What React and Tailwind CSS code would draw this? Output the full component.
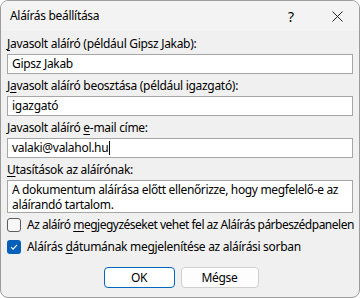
import React from "react";

const font = { fontFamily: '"Noto Sans", "Open Sans", sans-serif' };

const Key = ({ children }) => <span className="underline underline-offset-2">{children}</span>;

const Field = ({ label, value, cursor }) => (
  <div className="flex flex-col">
    <div className="h-[16px] leading-[16px] mt-[4px] mb-[2px] whitespace-nowrap">{label}</div>
    <div className="h-[20px] bg-white border border-[#a6a6a6] flex items-center px-[4px]">
      <span className="leading-[16px]">{value}</span>
      {cursor && <span className="w-px h-[14px] bg-black ml-[1px]" />}
    </div>
  </div>
);

export default function App() {
  return (
    <div
      className="w-[360px] h-[298px] bg-[#f0f0f0] border border-[#9c9c9c] rounded-[8px] overflow-hidden flex flex-col text-[12px] text-black tracking-[-0.3px]"
      style={font}
    >
      {/* title bar */}
      <div className="h-[30px] bg-[#f3f3f3] flex items-center shrink-0">
        <div className="pl-[9px] flex-1">Aláírás beállítása</div>
        <div className="w-[30px] text-center text-[14px] mr-[16px]">?</div>
        <div className="w-[30px] flex justify-center mr-[7px]">
          <svg width="11" height="11" viewBox="0 0 11 11">
            <path d="M0.5 0.5 L10.5 10.5 M10.5 0.5 L0.5 10.5" stroke="#222" strokeWidth="1" />
          </svg>
        </div>
      </div>

      <div className="px-[6px] pt-[1px] flex flex-col">
        <Field label={<><Key>J</Key>avasolt aláíró (például Gipsz Jakab):</>} value="Gipsz Jakab" />
        <Field label={<>J<Key>a</Key>vasolt aláíró beosztása (például igazgató):</>} value="igazgató" />
        <Field label={<>Javasolt aláíró <Key>e</Key>-mail címe:</>} value="valaki@valahol.hu" cursor />

        <div className="h-[16px] leading-[16px] mt-[4px] mb-[2px]">
          <Key>U</Key>tasítások az aláírónak:
        </div>
        <div className="h-[33px] bg-white border border-[#a6a6a6] px-[4px] pt-[1px] leading-[15px] tracking-[-0.35px]">
          A dokumentum aláírása előtt ellenőrizze, hogy megfelelő-e az aláírandó tartalom.
        </div>

        <div className="h-[22px] flex items-center mt-[1px]">
          <span className="w-[14px] h-[14px] rounded-[3px] border border-[#5c5c5c] bg-[#f7f7f7] shrink-0" />
          <span className="ml-[6px] whitespace-nowrap tracking-[-0.5px]">
            Az aláíró <Key>m</Key>egjegyzéseket vehet fel az Aláírás párbeszédpanelen
          </span>
        </div>
        <div className="h-[22px] flex items-center">
          <span className="w-[14px] h-[14px] rounded-[3px] bg-[#005fb8] shrink-0 flex items-center justify-center">
            <svg width="10" height="10" viewBox="0 0 10 10">
              <path d="M2 5.2 L4.1 7.2 L8 2.8" stroke="white" strokeWidth="1.1" fill="none" />
            </svg>
          </span>
          <span className="ml-[6px] whitespace-nowrap">
            Aláírás <Key>d</Key>átumának megjelenítése az aláírási sorban
          </span>
        </div>

        <div className="flex justify-center gap-[6px] mt-[9px] pl-[2px]">
          <button className="w-[71px] h-[21px] bg-white border border-[#0067c0] rounded-[4px] leading-[16px]">
            OK
          </button>
          <button className="w-[78px] h-[21px] bg-[#fdfdfd] border border-[#d0d0d0] rounded-[4px] leading-[16px]">
            Mégse
          </button>
        </div>
      </div>
    </div>
  );
}
